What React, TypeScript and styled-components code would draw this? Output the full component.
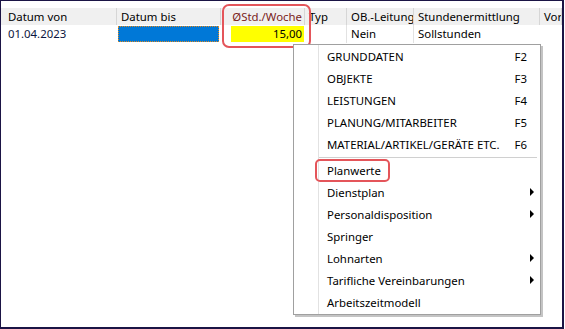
import React from 'react';
import styled, { createGlobalStyle } from 'styled-components';

const Global = createGlobalStyle`
  html, body { margin: 0; padding: 0; background: #ffffff; }
  body {
    font-family: "Noto Sans", "Open Sans", sans-serif;
    font-size: 11.4px;
    color: #000000;
  }
`;

const Frame = styled.div`
  position: relative;
  box-sizing: border-box;
  width: 564px;
  height: 329px;
  border: 1px solid #1b1445;
  border-right-width: 2px;
  border-bottom-width: 2px;
  padding-top: 7px;
  overflow: hidden;
`;

const Grid = styled.div`
  display: grid;
  grid-template-columns: 116px 104px 84px 42px 67px 126px 1fr;
  grid-template-rows: 17px 18px;
`;

const HeadCell = styled.div<{ $align?: 'left' | 'right'; $accent?: boolean; $first?: boolean }>`
  box-sizing: border-box;
  background: #f0f0f0;
  border-right: 1px solid #d6d6d6;
  padding: 0 ${(p) => (p.$align === 'right' ? '2px' : '0')} 0 ${(p) => (p.$first ? '7px' : '4px')};
  line-height: 17px;
  white-space: nowrap;
  overflow: hidden;
  text-align: ${(p) => p.$align ?? 'left'};
  color: ${(p) => (p.$accent ? '#7a1c1c' : '#000000')};
`;

const Cell = styled.div<{ $first?: boolean; $line?: boolean }>`
  box-sizing: border-box;
  padding-left: ${(p) => (p.$first ? '7px' : '4px')};
  line-height: 18px;
  white-space: nowrap;
  border-right: 1px solid ${(p) => (p.$line ? '#e2e2e2' : 'transparent')};
  color: ${(p) => (p.$first ? '#0c1640' : '#000000')};
`;

const FieldCell = styled.div`
  display: flex;
  padding: 1px;
  box-sizing: border-box;
`;

const FocusField = styled.div`
  flex: 1;
  background: #0078d7;
  outline: 1px dotted #e08a20;
  outline-offset: -1px;
  margin-right: 1px;
`;

const NumberField = styled.div`
  flex: 1;
  margin-left: 9px;
  background: #ffff00;
  text-align: right;
  padding-right: 2px;
  line-height: 16px;
`;

const Callout = styled.div`
  position: absolute;
  left: 221px;
  top: 3px;
  width: 89px;
  height: 44px;
  box-sizing: border-box;
  border: 2px solid #e4555a;
  border-radius: 7px;
`;

const Menu = styled.div`
  position: absolute;
  left: 292px;
  top: 43px;
  width: 248px;
  box-sizing: border-box;
  background: #ffffff;
  border: 1px solid #a0a0a0;
  box-shadow: 2px 2px 0 #c4c4c4;
  padding: 0 0 1px 0;
  display: flex;
  flex-direction: column;
  &::before {
    content: '';
    position: absolute;
    left: 24px;
    top: 0;
    bottom: 0;
    width: 1px;
    background: #e2e2e2;
  }
`;

const Item = styled.div`
  position: relative;
  display: flex;
  align-items: center;
  height: 22px;
  padding-left: 33px;
  white-space: nowrap;
`;

const Label = styled.span`
  position: relative;
`;

const Shortcut = styled.span`
  margin-left: auto;
  margin-right: 1px;
`;

const ArrowSlot = styled.span`
  width: 12px;
  margin-left: auto;
  display: flex;
  align-items: center;
  padding-left: 2px;
  box-sizing: border-box;
  ${Shortcut} + & {
    margin-left: 0;
  }
`;

const Arrow = styled.span`
  width: 0;
  height: 0;
  border-top: 4px solid transparent;
  border-bottom: 4px solid transparent;
  border-left: 4px solid #000000;
`;

const Separator = styled.div`
  height: 4px;
  margin-left: 25px;
  margin-right: 3px;
  display: flex;
  align-items: center;
  &::after {
    content: '';
    flex: 1;
    height: 1px;
    background: #d0d0d0;
  }
`;

const Mark = styled.span`
  position: absolute;
  left: -12px;
  top: -4px;
  right: -9px;
  bottom: -4px;
  border: 2px solid #e4555a;
  border-radius: 5px;
`;

type Entry = { label: string; key?: string; sub?: boolean; mark?: boolean } | 'sep';

const entries: Entry[] = [
  { label: 'GRUNDDATEN', key: 'F2' },
  { label: 'OBJEKTE', key: 'F3' },
  { label: 'LEISTUNGEN', key: 'F4' },
  { label: 'PLANUNG/MITARBEITER', key: 'F5' },
  { label: 'MATERIAL/ARTIKEL/GERÄTE ETC.', key: 'F6' },
  'sep',
  { label: 'Planwerte', mark: true },
  { label: 'Dienstplan', sub: true },
  { label: 'Personaldisposition', sub: true },
  { label: 'Springer' },
  { label: 'Lohnarten', sub: true },
  { label: 'Tarifliche Vereinbarungen', sub: true },
  { label: 'Arbeitszeitmodell' },
];

export default function App() {
  return (
    <>
      <Global />
      <Frame>
        <Grid>
          <HeadCell $first>Datum von</HeadCell>
          <HeadCell>Datum bis</HeadCell>
          <HeadCell $align="right" $accent>ØStd./Woche</HeadCell>
          <HeadCell>Typ</HeadCell>
          <HeadCell>OB.-Leitung</HeadCell>
          <HeadCell>Stundenermittlung</HeadCell>
          <HeadCell>Vorgang</HeadCell>

          <Cell $first>01.04.2023</Cell>
          <FieldCell>
            <FocusField />
          </FieldCell>
          <FieldCell>
            <NumberField>15,00</NumberField>
          </FieldCell>
          <Cell $line />
          <Cell $line>Nein</Cell>
          <Cell>Sollstunden</Cell>
          <Cell />
        </Grid>
        <Callout />
        <Menu>
          {entries.map((e, i) =>
            e === 'sep' ? (
              <Separator key={i} />
            ) : (
              <Item key={i}>
                <Label>
                  {e.label}
                  {e.mark && <Mark />}
                </Label>
                {e.key && <Shortcut>{e.key}</Shortcut>}
                <ArrowSlot>{e.sub && <Arrow />}</ArrowSlot>
              </Item>
            )
          )}
        </Menu>
      </Frame>
    </>
  );
}
